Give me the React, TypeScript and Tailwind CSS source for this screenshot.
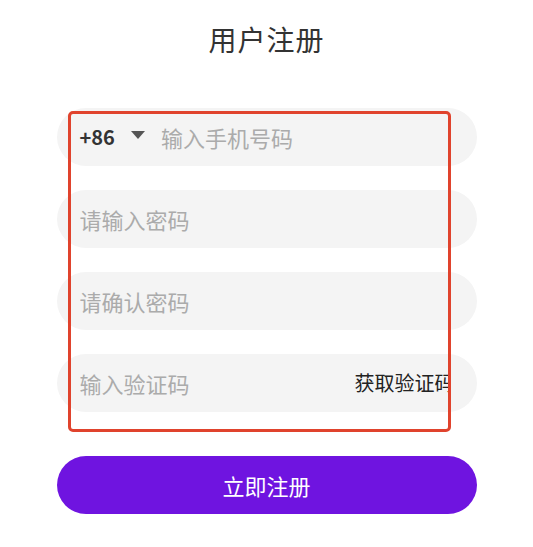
import { useState } from "react";

const font = { fontFamily: '"Noto Sans CJK SC", "Noto Sans", sans-serif' };

export default function App() {
    const [phone, setPhone] = useState("")
    const [password, setPassword] = useState("")
    const [confirm, setConfirm] = useState("")
    const [code, setCode] = useState("")

    const field = "h-[58px] w-full rounded-full bg-[#f4f4f4] flex items-center pl-[23px] pr-[28px]"
    const input = "flex-1 min-w-0 bg-transparent outline-none text-[22px] text-[#333] placeholder:text-[#ababab]"

    return (
        <div className="min-h-[547px] w-full bg-white" style={font}>
            <div className="mx-auto w-[420px] pt-[19px]">
                <h1 className="text-center text-[28px] leading-[40px] text-[#333] tracking-[1px]">
                    用户注册
                </h1>

                <div className="relative mt-[49px] flex flex-col gap-[24px]">
                    <div className={field}>
                        <span className="text-[20px] font-bold text-[#333]">+86</span>
                        <svg width="14" height="9" viewBox="0 0 14 9" className="ml-[16px] mr-[16px] mb-[3px]">
                            <path d="M0 0 L14 0 L7 8 Z" fill="#555" />
                        </svg>
                        <input
                            value={phone}
                            onChange={e => setPhone(e.target.value)}
                            placeholder="输入手机号码"
                            className={input}
                        />
                    </div>

                    <div className={field}>
                        <input
                            type="password"
                            value={password}
                            onChange={e => setPassword(e.target.value)}
                            placeholder="请输入密码"
                            className={input}
                        />
                    </div>

                    <div className={field}>
                        <input
                            type="password"
                            value={confirm}
                            onChange={e => setConfirm(e.target.value)}
                            placeholder="请确认密码"
                            className={input}
                        />
                    </div>

                    <div className={field}>
                        <input
                            value={code}
                            onChange={e => setCode(e.target.value)}
                            placeholder="输入验证码"
                            className={input}
                        />
                        <div className="w-[94px] overflow-hidden whitespace-nowrap text-[20px] text-[#222]">
                            获取验证码
                        </div>
                    </div>

                    {/* highlight box drawn over the fields */}
                    <div className="pointer-events-none absolute left-[11px] top-[3px] h-[321px] w-[383px] rounded-[5px] border-[3px] border-[#e0432d]" />
                </div>

                <button
                    type="button"
                    className="mt-[44px] h-[58px] w-full rounded-full bg-[#6f14e0] text-[22px] text-white"
                >
                    立即注册
                </button>
            </div>
        </div>
    )
}
